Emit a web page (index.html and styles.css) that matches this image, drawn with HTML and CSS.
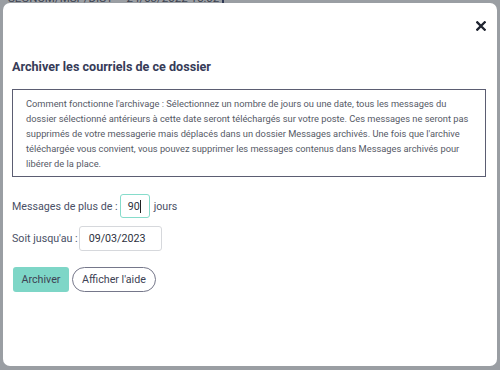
FILE: index.html
```html
<!DOCTYPE html>
<html lang="fr">
<head>
<meta charset="utf-8">
<link rel="stylesheet" href="styles.css">
</head>
<body>
<div class="page">
  <div class="row-behind">
    <span class="cell-a">SEGNUM/MSP/DIS1</span>
    <span class="cell-b">24/03/2022 15:02</span>
  </div>
  <div class="divider"></div>
</div>
<div class="overlay">
  <div class="modal">
    <div class="modal-head">
      <button class="close" aria-label="Fermer">
        <svg width="10" height="10" viewBox="0 0 10 10"><path d="M1.3 1.3L8.7 8.7M8.7 1.3L1.3 8.7" stroke="#1f2430" stroke-width="2.3" stroke-linecap="square"/></svg>
      </button>
    </div>
    <h2 class="title">Archiver les courriels de ce dossier</h2>
    <div class="info">Comment fonctionne l'archivage : Sélectionnez un nombre de jours ou une date, tous les messages du dossier sélectionné antérieurs à cette date seront téléchargés sur votre poste. Ces messages ne seront pas supprimés de votre messagerie mais déplacés dans un dossier Messages archivés. Une fois que l'archive téléchargée vous convient, vous pouvez supprimer les messages contenus dans Messages archivés pour libérer de la place.</div>
    <div class="field days">
      <span>Messages de plus de :</span>
      <span class="input focus">90<span class="caret"></span></span>
      <span class="unit">jours</span>
    </div>
    <div class="field date">
      <span>Soit jusqu'au :</span>
      <span class="input wide">09/03/2023</span>
    </div>
    <div class="actions">
      <button class="btn primary">Archiver</button>
      <button class="btn outline">Afficher l'aide</button>
    </div>
  </div>
</div>
</body>
</html>
```
FILE: styles.css
```css
html, body {
  margin: 0;
  padding: 0;
  width: 500px;
  height: 370px;
  overflow: hidden;
  background: #9a9ea3;
  font-family: Roboto, "Liberation Sans", sans-serif;
}
.page {
  position: relative;
  height: 370px;
}
.row-behind {
  display: flex;
  gap: 14px;
  padding-left: 8px;
  margin-top: -9px;
  font-size: 11.5px;
  line-height: 14px;
  color: #3c4250;
  height: 14px;
}
.divider {
  position: absolute;
  left: 222px;
  top: 0;
  width: 2px;
  height: 370px;
  background: #303a55;
}
.overlay {
  position: absolute;
  inset: 0;
  padding: 3px 3px 4px 3px;
  box-sizing: border-box;
}
.modal {
  background: #fff;
  height: 100%;
  border-radius: 7px;
  box-sizing: border-box;
  padding: 0 11px 0 9px;
}
.modal-head {
  display: flex;
  justify-content: flex-end;
  padding-top: 18px;
  height: 28px;
  box-sizing: border-box;
}
.close {
  border: 0;
  background: none;
  padding: 0;
  width: 10px;
  height: 10px;
  display: flex;
}
.title {
  margin: 28px 0 0 0;
  font-size: 12.6px;
  font-weight: 700;
  color: #363b58;
  line-height: 16px;
}
.info {
  margin-top: 14px;
  border: 1px solid #5b5d72;
  padding: 6px 10px 5px 13px;
  font-size: 9.3px;
  line-height: 15px;
  color: #565a66;
  width: 474px;
  box-sizing: border-box;
}
.field {
  display: flex;
  align-items: center;
  gap: 2px;
  font-size: 10.7px;
  color: #4a5066;
}
.days { margin-top: 17px; }
.date { margin-top: 8px; gap: 1px; }
.unit { margin-left: 2px; }
.input {
  display: inline-flex;
  align-items: center;
  box-sizing: border-box;
  border: 1px solid #d6d8dc;
  border-radius: 3px;
  color: #2d3140;
  font-size: 10.7px;
}
.input.focus {
  width: 30px;
  height: 24px;
  border: 1.5px solid #86dccb;
  padding: 0 0 0 7px;
}
.caret {
  display: inline-block;
  width: 1px;
  height: 13px;
  background: #222;
}
.input.wide {
  width: 83px;
  height: 25px;
  padding-left: 9px;
}
.actions {
  display: flex;
  gap: 3px;
  margin-top: 16px;
}
.btn {
  font-family: inherit;
  font-size: 10.7px;
  height: 25px;
  box-sizing: border-box;
  color: #3d4254;
  cursor: pointer;
  padding: 0;
}
.primary {
  width: 56px;
  margin-left: 1px;
  background: #7ed6c7;
  border: 0;
  border-radius: 3px;
}
.outline {
  width: 84px;
  background: #fff;
  border: 1px solid #75778a;
  border-radius: 13px;
}
```
